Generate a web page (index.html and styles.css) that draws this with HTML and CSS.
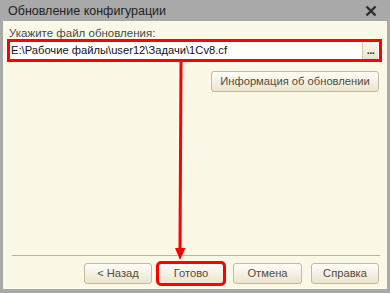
FILE: index.html
```html
<!DOCTYPE html>
<html lang="ru">
<head>
<meta charset="utf-8">
<title>Обновление конфигурации</title>
<link rel="stylesheet" href="styles.css">
</head>
<body>
<div class="window">
  <div class="titlebar">
    <span class="title">Обновление конфигурации</span>
    <svg class="close" width="12" height="12" viewBox="0 0 12 12"><path d="M1.5 1.5 L10.5 10.5 M10.5 1.5 L1.5 10.5" stroke="#2e2e2e" stroke-width="2.4" fill="none"/></svg>
  </div>
  <div class="content">
    <div class="label">Укажите файл обновления:</div>
    <div class="field">
      <div class="field-text">E:\Рабочие файлы\user12\Задачи\1Cv8.cf</div>
      <div class="pick">...</div>
    </div>
    <div class="info-row">
      <div class="btn btn-info">Информация об обновлении</div>
    </div>
    <div class="spacer"></div>
    <div class="separator"></div>
    <div class="buttons">
      <div class="btn btn-back">&lt; Назад</div>
      <div class="btn btn-done">Готово</div>
      <div class="btn btn-cancel">Отмена</div>
      <div class="btn btn-help">Справка</div>
    </div>
  </div>
  <svg class="arrow" width="390" height="293" viewBox="0 0 390 293">
    <path d="M181 61 L180 250" stroke="#ff0000" stroke-width="3" fill="none"/>
    <path d="M175 248 L185.5 248 L180 260 Z" fill="#ff0000"/>
  </svg>
</div>
</body>
</html>
```

FILE: styles.css
```css
* { box-sizing: border-box; }
html, body { margin: 0; padding: 0; }
body {
  width: 390px;
  height: 293px;
  overflow: hidden;
  font-family: "Liberation Sans", Arial, sans-serif;
  background: #a9a9a9;
}
.window {
  position: relative;
  width: 390px;
  height: 293px;
  display: flex;
  flex-direction: column;
  background: #a9a9a9;
}
.titlebar {
  height: 21px;
  display: flex;
  align-items: center;
  justify-content: space-between;
  padding: 0 13px 0 8px;
}
.title {
  font-size: 12.5px;
  color: #222222;
}
.close { display: block; margin-top: 1px; }
.content {
  flex: 1;
  margin: 0 3px 4px 3px;
  background: #fbf8e8;
  display: flex;
  flex-direction: column;
  padding: 6px 5px 5px 4px;
}
.label {
  font-size: 11.5px;
  line-height: 12px;
  color: #4a4a4a;
  padding-left: 2px;
}
.field {
  height: 23px;
  border: 3px solid #ff0000;
  background: #ffffff;
  display: flex;
  align-items: stretch;
  justify-content: space-between;
}
.field-text {
  font-size: 11.2px;
  line-height: 17px;
  color: #111122;
  padding-left: 1px;
}
.pick {
  width: 16px;
  margin: 0 1px 0 0;
  background: linear-gradient(#fbf9ef, #e9e3cb);
  border-left: 1px solid #d2cbb0;
  font-size: 11px;
  line-height: 16px;
  text-align: center;
  color: #3a3a3a;
  font-weight: bold;
  letter-spacing: -0.5px;
}
.info-row {
  display: flex;
  justify-content: flex-end;
  margin-top: 9px;
  padding-right: 3px;
}
.btn {
  height: 21px;
  border: 1px solid #c3bb9e;
  border-radius: 3px;
  background: linear-gradient(#fefdf9, #f3efdf 60%, #ebe5cd);
  font-size: 11.2px;
  line-height: 19px;
  color: #524c3b;
  text-align: center;
}
.btn-info { width: 168px; }
.spacer { flex: 1; }
.separator {
  height: 1px;
  background: #bdb597;
  margin: 0 2px 7px 5px;
}
.buttons {
  display: flex;
  justify-content: flex-end;
  padding-right: 3px;
}
.btn-back { width: 68px; margin-right: 6px; }
.btn-done { width: 66px; margin-right: 9px; outline: 3px solid #ff0000; outline-offset: -1px; }
.btn-cancel { width: 69px; margin-right: 9px; }
.btn-help { width: 68px; }
.arrow {
  position: absolute;
  left: 0;
  top: 0;
  pointer-events: none;
}
```
